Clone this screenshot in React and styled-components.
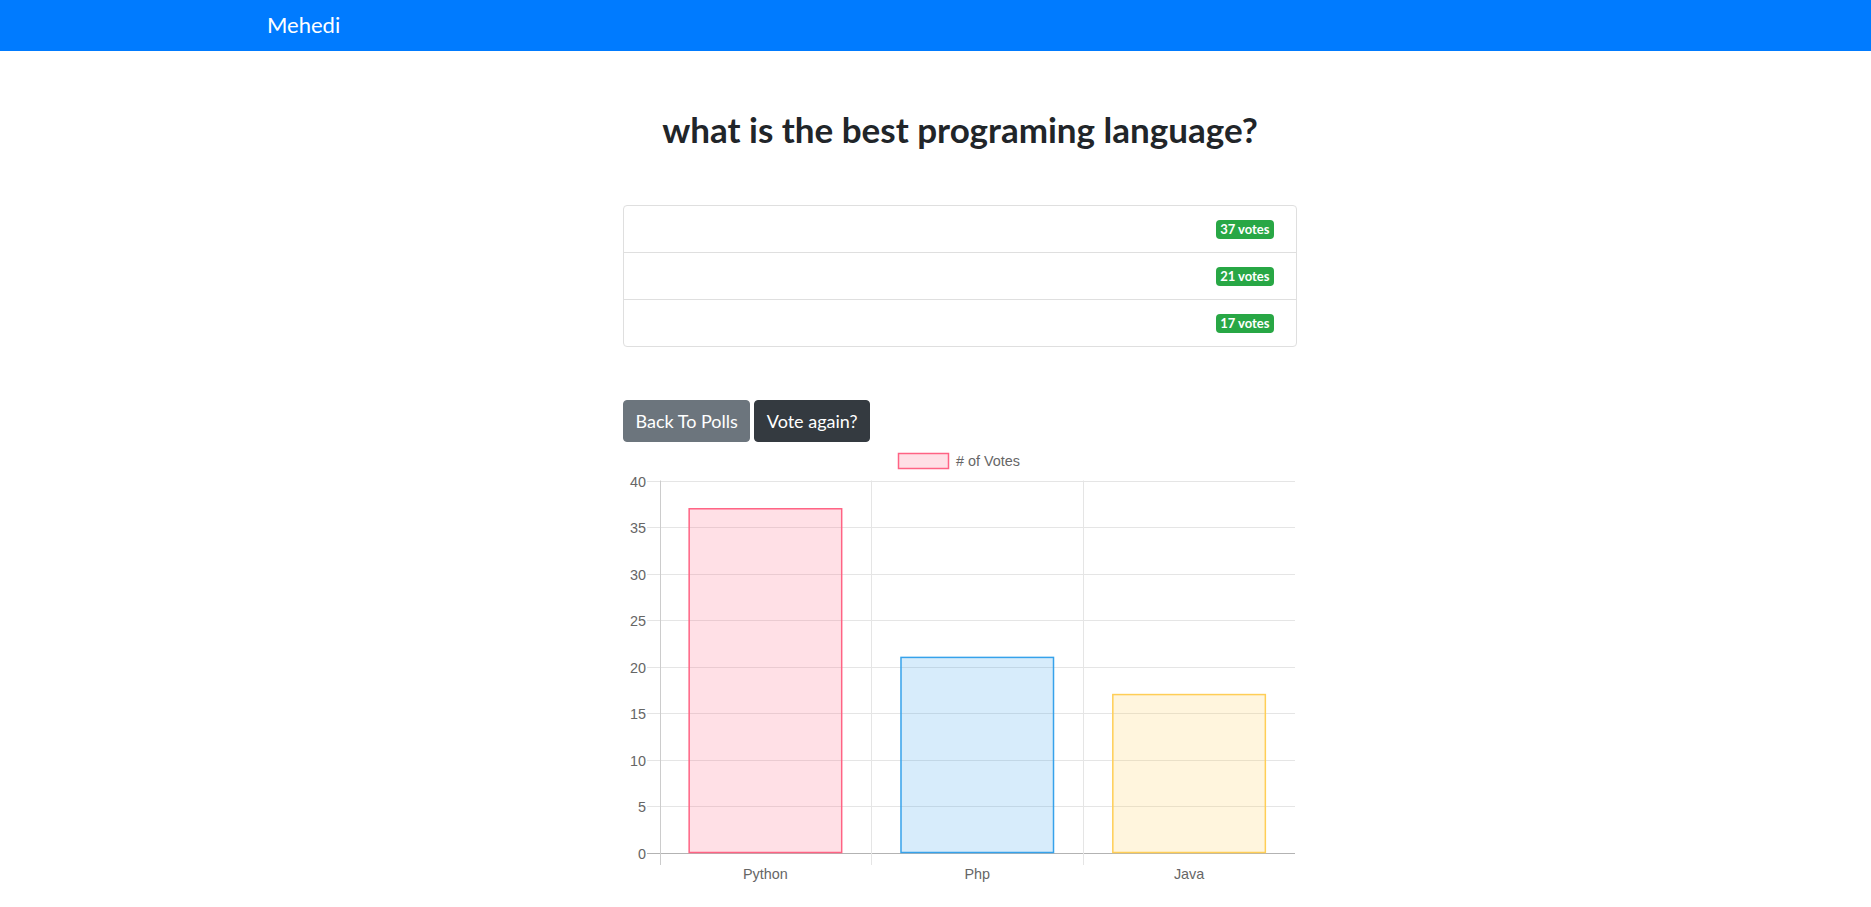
import React from "react";
import styled, { createGlobalStyle } from "styled-components";

const GlobalStyle = createGlobalStyle`
  body {
    margin: 0;
    font-family: Lato, "Noto Sans", sans-serif;
    color: #212529;
    background: #fff;
  }
`;

const Navbar = styled.nav`
  height: 51px;
  background-color: #007bff;
  display: flex;
  align-items: center;
  padding: 0 267px;
`;

const Brand = styled.span`
  color: #fff;
  font-size: 22px;
  line-height: 1;
  margin-top: -2px;
`;

const Main = styled.main`
  padding-left: 623px;
`;

const Column = styled.div`
  width: 674px;
  display: flex;
  flex-direction: column;
`;

const Title = styled.h2`
  margin: 57px 0 0;
  font-size: 35px;
  font-weight: 700;
  line-height: 1.2;
  text-align: center;
  color: #212529;
`;

const List = styled.ul`
  list-style: none;
  margin: 55px 0 0;
  padding: 0;
  border: 1px solid #dfdfdf;
  border-radius: 4px;
`;

const Row = styled.li`
  height: 46px;
  display: flex;
  align-items: center;
  justify-content: flex-end;
  padding: 0 22px;
  border-top: ${(p) => (p.$first ? "none" : "1px solid #dfdfdf")};
`;

const Badge = styled.span`
  background-color: #28a745;
  color: #fff;
  font-size: 13px;
  font-weight: 700;
  line-height: 1;
  padding: 3px 4.5px;
  border-radius: 4px;
  margin-top: 1px;
`;

const Actions = styled.div`
  display: flex;
  gap: 4px;
  margin-top: 53px;
`;

const Button = styled.button`
  font-family: Lato, "Noto Sans", sans-serif;
  font-size: 18px;
  line-height: 27px;
  padding: 6.5px 11.5px;
  color: #fff;
  border: 1px solid ${(p) => p.$bg};
  background-color: ${(p) => p.$bg};
  border-radius: 4px;
  cursor: pointer;
`;

const ChartBox = styled.svg`
  display: block;
  font-family: "Liberation Sans", Arial, sans-serif;
`;

const polls = [
  { name: "Python", votes: 37, color: "255,99,132" },
  { name: "Php", votes: 21, color: "54,162,235" },
  { name: "Java", votes: 17, color: "255,206,86" },
];

const left = 36.5;
const right = 672;
const zero = 410.5;
const unit = 9.29;
const catW = (right - left) / 3;
const barW = catW * 0.72;

function VoteChart() {
  const ticks = [40, 35, 30, 25, 20, 15, 10, 5, 0];
  return (
    <ChartBox width="674" height="460" viewBox="0 0 674 460">
      <rect x="275.5" y="11.5" width="50" height="15" fill="rgba(255,99,132,0.2)" stroke="rgb(255,99,132)" strokeWidth="1.5" />
      <text x="333" y="24" fontSize="14.4" fill="#666">
        # of Votes
      </text>
      {ticks.map((t) => {
        const y = Math.round(zero - t * unit) + 0.5;
        return (
          <g key={t}>
            <line x1="24" x2={right} y1={y} y2={y} stroke={t === 0 ? "#b3b3b3" : "#e5e5e5"} strokeWidth="1" />
            <text x="23" y={y + 5} fontSize="14.4" fill="#666" textAnchor="end">
              {t}
            </text>
          </g>
        );
      })}
      {[0, 1, 2].map((i) => {
        const x = Math.round(left + i * catW) + 0.5;
        return <line key={i} x1={x} x2={x} y1="38.5" y2="423" stroke={i === 0 ? "#cccccc" : "#e5e5e5"} strokeWidth="1" />;
      })}
      {polls.map((p, i) => {
        const x = left + i * catW + (catW - barW) / 2;
        const h = p.votes * unit;
        return (
          <g key={p.name}>
            <rect
              x={x}
              y={zero - h}
              width={barW}
              height={h}
              fill={`rgba(${p.color},0.2)`}
              stroke={`rgb(${p.color})`}
              strokeWidth="1.5"
            />
            <text x={left + i * catW + catW / 2} y="437" fontSize="14.4" fill="#666" textAnchor="middle">
              {p.name}
            </text>
          </g>
        );
      })}
    </ChartBox>
  );
}

export default function App() {
  return (
    <>
      <GlobalStyle />
      <Navbar>
        <Brand>Mehedi</Brand>
      </Navbar>
      <Main>
        <Column>
          <Title>what is the best programing language?</Title>
          <List>
            {polls.map((p, i) => (
              <Row key={p.name} $first={i === 0}>
                <Badge>{p.votes} votes</Badge>
              </Row>
            ))}
          </List>
          <Actions>
            <Button $bg="#6c757d">Back To Polls</Button>
            <Button $bg="#343a40">Vote again?</Button>
          </Actions>
          <VoteChart />
        </Column>
      </Main>
    </>
  );
}
